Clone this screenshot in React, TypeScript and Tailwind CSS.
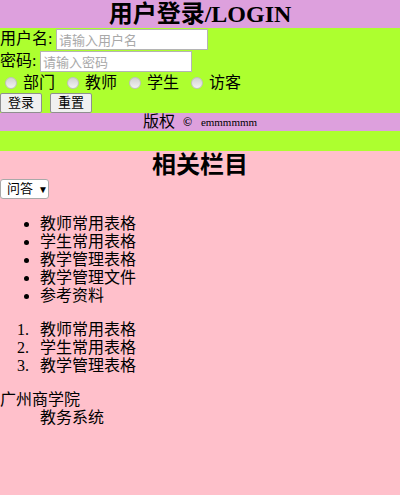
export default function App() {
  const radios = ["部门", "教师", "学生", "访客"];
  const bullets = ["教师常用表格", "学生常用表格", "教学管理表格", "教学管理文件", "参考资料"];
  const numbered = ["教师常用表格", "学生常用表格", "教学管理表格"];

  return (
    <div className="min-h-[495px] bg-[#ffc0cb] text-black text-[16px] font-['Liberation_Serif','Noto_Sans_CJK_SC',serif]">
      {/* login header */}
      <div className="h-[28px] bg-[#dda0dd] flex items-center justify-center">
        <h2 className="text-[24px] font-bold leading-[28px]">用户登录/LOGIN</h2>
      </div>

      {/* form */}
      <div className="bg-[#adff2f]">
        <div className="h-[22px] flex items-center">
          <span>用户名</span>
          <span className="inline-block w-[8px]">:</span>
          <input
            placeholder="请输入用户名"
            className="w-[152px] h-[21px] bg-white border border-[#b4b4b4] px-[2px] text-[13px] placeholder:text-[#a9a9a9] font-['Noto_Sans_CJK_SC',sans-serif]"
          />
        </div>
        <div className="h-[22px] flex items-center">
          <span>密码</span>
          <span className="inline-block w-[8px]">:</span>
          <input
            placeholder="请输入密码"
            className="w-[152px] h-[21px] bg-white border border-[#b4b4b4] px-[2px] text-[13px] placeholder:text-[#a9a9a9] font-['Noto_Sans_CJK_SC',sans-serif]"
          />
        </div>
        <div className="h-[21px] flex items-center gap-[7px]">
          {radios.map((r) => (
            <label key={r} className="flex items-center">
              <span className="ml-[5px] mr-[6px] w-[12px] h-[12px] rounded-full border border-[#c0c0c0] bg-gradient-to-b from-[#d2d2d2] to-[#f2f2f2]" />
              <span>{r}</span>
            </label>
          ))}
        </div>
        <div className="h-[20px] flex items-start gap-[8px]">
          <button className="w-[42px] h-[20px] text-[13px] leading-[16px] bg-[#f0f0f0] border border-[#8f8f8f] rounded-[2px]">
            登录
          </button>
          <button className="w-[42px] h-[20px] text-[13px] leading-[16px] bg-[#f0f0f0] border border-[#8f8f8f] rounded-[2px]">
            重置
          </button>
        </div>
      </div>

      {/* copyright */}
      <div className="h-[18px] bg-[#dda0dd] flex items-center justify-center">
        <span>版权</span>
        <span className="ml-[8px] text-[12px] font-bold">©</span>
        <span className="ml-[9px] text-[11px]">emmmmmm</span>
      </div>
      <div className="h-[20px] bg-[#adff2f]" />

      {/* related */}
      <h2 className="h-[28px] text-[24px] font-bold leading-[28px] text-center">相关栏目</h2>
      <div className="w-[49px] h-[20px] bg-white border border-[#a9a9a9] rounded-[3px] flex items-center text-[13px]">
        <span className="ml-[6px]">问答</span>
        <span className="ml-[5px] text-[10px]">▼</span>
      </div>

      <ul className="mt-[16px] pl-[40px] list-disc leading-[18px]">
        {bullets.map((b) => (
          <li key={b}>{b}</li>
        ))}
      </ul>
      <ol className="mt-[16px] pl-[17px] leading-[18px]">
        {numbered.map((n, i) => (
          <li key={n} className="flex">
            <span className="w-[23px]">{i + 1}.</span>
            <span>{n}</span>
          </li>
        ))}
      </ol>

      <dl className="mt-[16px] leading-[18px]">
        <dt>广州商学院</dt>
        <dd className="ml-[40px]">教务系统</dd>
      </dl>
    </div>
  );
}
